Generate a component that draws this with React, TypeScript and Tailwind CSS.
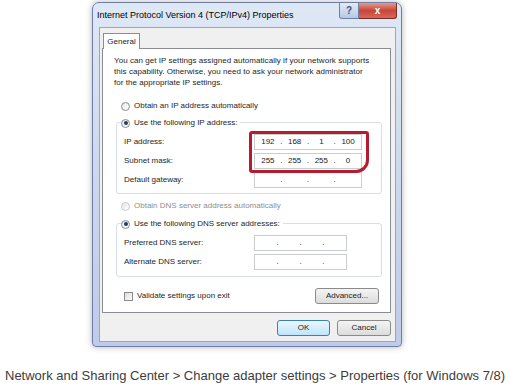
import React from "react";

function Radio({ checked, disabled }: { checked?: boolean; disabled?: boolean }) {
  return (
    <span
      className={
        "flex h-[9px] w-[9px] shrink-0 items-center justify-center rounded-full border bg-gradient-to-br from-[#e6e6e6] to-white " +
        (disabled ? "border-[#c8c8c8]" : "border-[#8b8b8b]")
      }
    >
      {checked && <span className="h-[4px] w-[4px] rounded-full bg-[#1c3e73]" />}
    </span>
  );
}

function IpField({ parts, seg = 22 }: { parts: string[]; seg?: number }) {
  const w = seg === 22 ? "w-[22px]" : "w-[18.5px]";
  return (
    <div className="flex h-[16px] items-center border border-[#c9ccd1] bg-white px-[2px] text-[#222]">
      {parts.map((p, i) => (
        <React.Fragment key={i}>
          {i > 0 && <span className="w-[5px] text-center">.</span>}
          <span className={w + " text-center"}>{p}</span>
        </React.Fragment>
      ))}
    </div>
  );
}

function WinButton({ label, primary, className }: { label: string; primary?: boolean; className: string }) {
  return (
    <div
      className={
        "flex h-[16px] items-center justify-center rounded-[3px] border bg-gradient-to-b text-[8px] text-[#222] " +
        (primary
          ? "border-[#3c7fb1] from-[#eaf6fd] to-[#bee6fd]"
          : "border-[#8a8a8a] from-[#f4f4f4] to-[#dcdcdc]") +
        " " +
        className
      }
    >
      {label}
    </div>
  );
}

export default function App() {
  return (
    <div className="h-[388px] w-[510px] overflow-hidden bg-white font-['Liberation_Sans',Arial,sans-serif]">
      <div className="pl-[92px] pt-[2px]">
        {/* Window frame */}
        <div className="flex h-[345px] w-[310px] flex-col rounded-t-[7px] rounded-b-[4px] border border-[#6e7dac] bg-gradient-to-b from-[#dfe8f5] via-[#cbd8ed] to-[#bfcbe8] shadow-[0_0_6px_rgba(0,0,0,0.3)]">
          {/* Title bar */}
          <div className="flex h-[24px] shrink-0 items-start justify-between pl-[4px] pr-[4px]">
            <span className="mt-[7px] text-[9px] leading-[11px] text-black">
              Internet Protocol Version 4 (TCP/IPv4) Properties
            </span>
            <div className="flex">
              <div className="flex h-[16px] w-[20px] items-center justify-center rounded-bl-[3px] border border-t-0 border-[#6f7fa8] bg-gradient-to-b from-[#e3ebf6] to-[#b8c8e2] text-[10px] font-bold leading-none text-[#46557a]">
                ?
              </div>
              <div className="flex h-[16px] w-[38px] items-center justify-center rounded-br-[3px] border border-l-0 border-t-0 border-[#7a2b24] bg-gradient-to-b from-[#e19a8d] via-[#c8453a] to-[#d7675b] text-[10px] font-bold leading-none text-white">
                x
              </div>
            </div>
          </div>

          {/* Client area */}
          <div className="mb-[4px] ml-[6px] mr-[5px] flex flex-1 flex-col border border-[#97a5c7] bg-[#f0f0f0] text-[8px] text-[#1e1e1e]">
            <div className="pl-[3px] pt-[5px]">
              <div className="relative z-10 mb-[-1px] flex h-[16px] w-[37px] items-center justify-center border border-b-0 border-[#898c95] bg-white">
                General
              </div>
            </div>
            <div className="ml-[2px] mr-[4px] flex h-[265px] flex-col border border-[#898c95] bg-white">
              <p className="whitespace-nowrap pl-[11px] pt-[6px] leading-[11px] tracking-[0.05px]">
                You can get IP settings assigned automatically if your network supports
                <br />
                this capability. Otherwise, you need to ask your network administrator
                <br />
                for the appropriate IP settings.
              </p>

              <div className="ml-[13px] mr-[8px] flex flex-col">
                <div className="mt-[12px] flex h-[12px] items-center gap-[4px] pl-[5px]">
                  <Radio />
                  <span>Obtain an IP address automatically</span>
                </div>

                {/* IP group */}
                <div className="relative mt-[10px] flex flex-col rounded-[3px] border border-[#d5dfe5] pb-[5px]">
                  <div className="-mt-[6px] ml-[4px] flex h-[12px] w-fit items-center gap-[4px] bg-white pr-[3px]">
                    <Radio checked />
                    <span>Use the following IP address:</span>
                  </div>
                  <div className="mt-[5px] flex flex-col gap-[3px] pl-[7px]">
                    <div className="flex items-center">
                      <span className="w-[130px]">IP address:</span>
                      <div className="w-[108px]">
                        <IpField parts={["192", "168", "1", "100"]} />
                      </div>
                    </div>
                    <div className="flex items-center">
                      <span className="w-[130px]">Subnet mask:</span>
                      <div className="w-[108px]">
                        <IpField parts={["255", "255", "255", "0"]} />
                      </div>
                    </div>
                    <div className="flex items-center">
                      <span className="w-[130px]">Default gateway:</span>
                      <div className="w-[108px]">
                        <IpField parts={["", "", "", ""]} />
                      </div>
                    </div>
                  </div>
                  {/* red highlight */}
                  <div className="pointer-events-none absolute left-[132px] top-[8px] h-[42px] w-[120px] rounded-[3px] rounded-br-[13px] border-[3px] border-[#b71c2e]" />
                </div>

                <div className="mt-[6px] flex h-[12px] items-center gap-[4px] pl-[5px] text-[#8e8e8e]">
                  <Radio disabled />
                  <span>Obtain DNS server address automatically</span>
                </div>

                {/* DNS group */}
                <div className="mt-[11px] flex flex-col rounded-[3px] border border-[#d5dfe5] pb-[6px]">
                  <div className="-mt-[6px] ml-[4px] flex h-[12px] w-fit items-center gap-[4px] bg-white pr-[3px]">
                    <Radio checked />
                    <span>Use the following DNS server addresses:</span>
                  </div>
                  <div className="mt-[5px] flex flex-col gap-[3px] pl-[7px]">
                    <div className="flex items-center">
                      <span className="w-[130px]">Preferred DNS server:</span>
                      <div className="w-[93px]">
                        <IpField parts={["", "", "", ""]} seg={18} />
                      </div>
                    </div>
                    <div className="flex items-center">
                      <span className="w-[130px]">Alternate DNS server:</span>
                      <div className="w-[93px]">
                        <IpField parts={["", "", "", ""]} seg={18} />
                      </div>
                    </div>
                  </div>
                </div>

                <div className="mt-[11px] flex items-center justify-between pl-[8px] pr-[3px]">
                  <div className="flex items-center gap-[4px]">
                    <span className="h-[9px] w-[9px] border border-[#8b8b8b] bg-gradient-to-br from-[#dedede] to-[#fbfbfb]" />
                    <span>Validate settings upon exit</span>
                  </div>
                  <WinButton label="Advanced..." className="w-[64px]" />
                </div>
              </div>
            </div>

            <div className="mt-[7px] flex justify-end gap-[7px] pr-[4px]">
              <WinButton label="OK" primary className="w-[53px]" />
              <WinButton label="Cancel" className="w-[54px]" />
            </div>
          </div>
        </div>
      </div>

      <p className="mt-[21px] pl-[5px] text-[13px] leading-[15px] text-[#3c3c3c]">
        Network and Sharing Center &gt; Change adapter settings &gt; Properties (for Windows 7/8)
      </p>
    </div>
  );
}
